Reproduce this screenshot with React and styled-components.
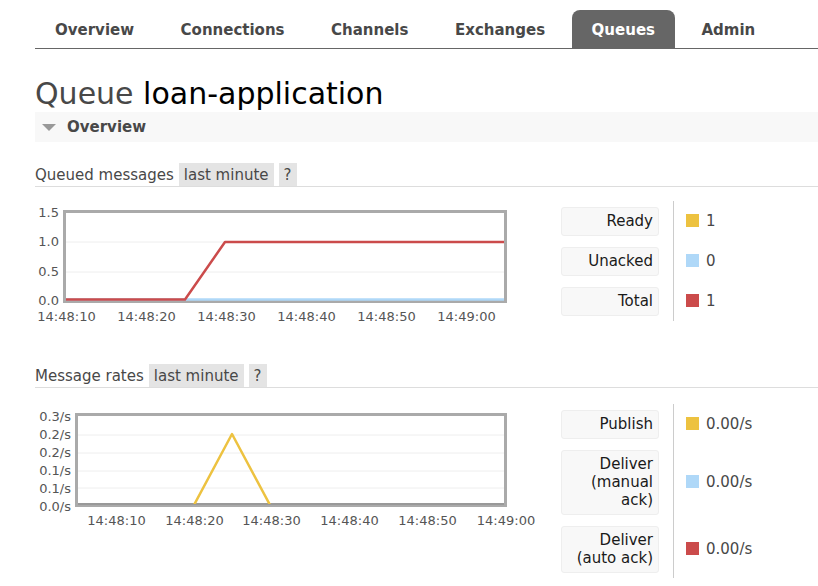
import styled, { createGlobalStyle } from "styled-components";

/* ---------- global ---------- */
const GlobalStyle = createGlobalStyle`
  body {
    margin: 0;
    background: #fff;
    font-family: "DejaVu Sans", Verdana, sans-serif;
    color: #484848;
  }
`;

/* ---------- layout ---------- */
const Page = styled.div`
  padding: 10px 0 0 35px;
`;

const Tabs = styled.ul`
  display: flex;
  list-style: none;
  margin: 0;
  padding: 0;
  border-bottom: 1px solid #666;
`;

const Tab = styled.li`
  margin-right: 6.5px;
  padding: 0 20px;
  height: 38px;
  line-height: 40px;
  font-size: 15px;
  font-weight: bold;
  border-radius: 8px 8px 0 0;
  background: ${(p) => (p.$active ? "#666" : "transparent")};
  color: ${(p) => (p.$active ? "#fff" : "#484848")};
`;

const Title = styled.h1`
  margin: 27px 0 0;
  font-size: 30px;
  line-height: 36px;
  font-weight: normal;
  color: #484848;

  b {
    font-weight: normal;
    color: #000;
  }
`;

const SectionBar = styled.h2`
  margin: 0;
  height: 30px;
  display: flex;
  align-items: center;
  background: #f8f8f8;
  font-size: 15px;
  font-weight: bold;
  color: #484848;
`;

const Arrow = styled.span`
  width: 0;
  height: 0;
  border-left: 7px solid transparent;
  border-right: 7px solid transparent;
  border-top: 7px solid #999;
  margin: 0 11px 0 7px;
`;

const ChartHeading = styled.h3`
  margin: ${(p) => p.$top}px 0 0;
  display: flex;
  align-items: center;
  gap: 5px;
  font-size: 15px;
  line-height: 18px;
  font-weight: normal;
  color: #484848;
  border-bottom: 1px solid #ddd;
`;

const Badge = styled.span`
  background: #e4e4e4;
  padding: 3px 5px 2px;
`;

const ChartRow = styled.div`
  display: flex;
  align-items: flex-start;
  margin-top: ${(p) => p.$top}px;
`;

const ChartBox = styled.div`
  width: 526px;
  flex-shrink: 0;

  svg {
    display: block;
    font-family: "DejaVu Sans", Verdana, sans-serif;
  }
`;

const Legend = styled.table`
  border-collapse: collapse;
`;

const LabelCell = styled.th`
  padding: 6px 14px 5px 0;
  font-weight: normal;
`;

const LabelBox = styled.div`
  width: 98px;
  box-sizing: border-box;
  padding: 4px 5px 5px;
  background: #f8f8f8;
  border: 1px solid #eee;
  border-radius: 3px;
  text-align: right;
  font-size: 15px;
  line-height: 18px;
  color: #1a1a1a;
`;

const ValueCell = styled.td`
  border-left: 1px solid #ccc;
  padding: 0 0 0 12px;
  vertical-align: middle;
  font-size: 15px;
  white-space: nowrap;
  color: #484848;
`;

const Swatch = styled.span`
  display: inline-block;
  width: 13px;
  height: 13px;
  margin-right: 7px;
  vertical-align: -1px;
  background: ${(p) => p.$color};
`;

/* ---------- content ---------- */
const YELLOW = "#edc240";
const BLUE = "#afd8f8";
const RED = "#cb4b4b";

const tabs = ["Overview", "Connections", "Channels", "Exchanges", "Queues", "Admin"];
const times = ["14:48:10", "14:48:20", "14:48:30", "14:48:40", "14:48:50", "14:49:00"];

const queued = [
  { label: "Ready", color: YELLOW, value: "1" },
  { label: "Unacked", color: BLUE, value: "0" },
  { label: "Total", color: RED, value: "1" },
];

const rates = [
  { label: "Publish", color: YELLOW, value: "0.00/s" },
  { label: "Deliver (manual ack)", color: BLUE, value: "0.00/s" },
  { label: "Deliver (auto ack)", color: RED, value: "0.00/s" },
];

/* ---------- charts ---------- */
function QueuedChart() {
  const xs = [31.5, 111.5, 191.5, 271.5, 351.5, 431.5];
  const ticks = [
    ["1.5", 12.5],
    ["1.0", 41.5],
    ["0.5", 71],
    ["0.0", 100],
  ];
  return (
    <svg width="480" height="125">
      <rect x="29.5" y="10.5" width="441" height="90" fill="#fff" stroke="#aaa" strokeWidth="3" />
      <line x1="31" y1="41" x2="469" y2="41" stroke="#eee" />
      <line x1="31" y1="71" x2="469" y2="71" stroke="#eee" />
      <polyline points="31,98.5 469,98.5" fill="none" stroke={BLUE} strokeWidth="2.5" />
      <polyline
        points="31,98.5 150,98.5 190,41 469,41"
        fill="none"
        stroke={RED}
        strokeWidth="2.5"
        strokeLinejoin="round"
      />
      {ticks.map(([t, y]) => (
        <text key={t} x="24" y={y} textAnchor="end" dominantBaseline="middle" fontSize="13" fill="#555">
          {t}
        </text>
      ))}
      {times.map((t, i) => (
        <text key={t} x={xs[i]} y="116" textAnchor="middle" dominantBaseline="middle" fontSize="13" fill="#555">
          {t}
        </text>
      ))}
    </svg>
  );
}

function RatesChart() {
  const xs = [81.5, 159.5, 236.5, 314.5, 392.5, 471];
  const ticks = [
    ["0.3/s", 13],
    ["0.2/s", 31],
    ["0.2/s", 49],
    ["0.1/s", 67],
    ["0.1/s", 85],
    ["0.0/s", 103],
  ];
  return (
    <svg width="515" height="128">
      <defs>
        <clipPath id="ratesPlot">
          <rect x="43" y="12" width="426" height="88" />
        </clipPath>
      </defs>
      <rect x="41.5" y="10.5" width="429" height="91" fill="#fff" stroke="#aaa" strokeWidth="3" />
      {[31, 49, 67, 84].map((y) => (
        <line key={y} x1="43" y1={y} x2="469" y2={y} stroke="#eee" />
      ))}
      <line x1="43" y1="100" x2="469" y2="100" stroke="#999" strokeWidth="2" />
      <polyline
        clipPath="url(#ratesPlot)"
        points="159,101 197,30 235,101"
        fill="none"
        stroke={YELLOW}
        strokeWidth="2.5"
        strokeLinejoin="round"
      />
      {ticks.map(([t, y], i) => (
        <text key={i} x="36" y={y} textAnchor="end" dominantBaseline="middle" fontSize="13" fill="#555">
          {t}
        </text>
      ))}
      {times.map((t, i) => (
        <text key={t} x={xs[i]} y="117" textAnchor="middle" dominantBaseline="middle" fontSize="13" fill="#555">
          {t}
        </text>
      ))}
    </svg>
  );
}

function LegendTable({ rows }) {
  return (
    <Legend>
      <tbody>
        {rows.map(({ label, color, value }) => (
          <tr key={label}>
            <LabelCell>
              <LabelBox>{label}</LabelBox>
            </LabelCell>
            <ValueCell>
              <Swatch $color={color} />
              {value}
            </ValueCell>
          </tr>
        ))}
      </tbody>
    </Legend>
  );
}

/* ---------- main ---------- */
export default function App() {
  return (
    <>
      <GlobalStyle />
      <Page>
        <Tabs>
          {tabs.map((t) => (
            <Tab key={t} $active={t === "Queues"}>
              {t}
            </Tab>
          ))}
        </Tabs>

        <Title>
          Queue <b>loan-application</b>
        </Title>

        <SectionBar>
          <Arrow />
          Overview
        </SectionBar>

        <ChartHeading $top={21}>
          Queued messages <Badge>last minute</Badge>
          <Badge>?</Badge>
        </ChartHeading>
        <ChartRow $top={14}>
          <ChartBox>
            <QueuedChart />
          </ChartBox>
          <LegendTable rows={queued} />
        </ChartRow>

        <ChartHeading $top={38}>
          Message rates <Badge>last minute</Badge>
          <Badge>?</Badge>
        </ChartHeading>
        <ChartRow $top={16}>
          <ChartBox>
            <RatesChart />
          </ChartBox>
          <LegendTable rows={rates} />
        </ChartRow>
      </Page>
    </>
  );
}
